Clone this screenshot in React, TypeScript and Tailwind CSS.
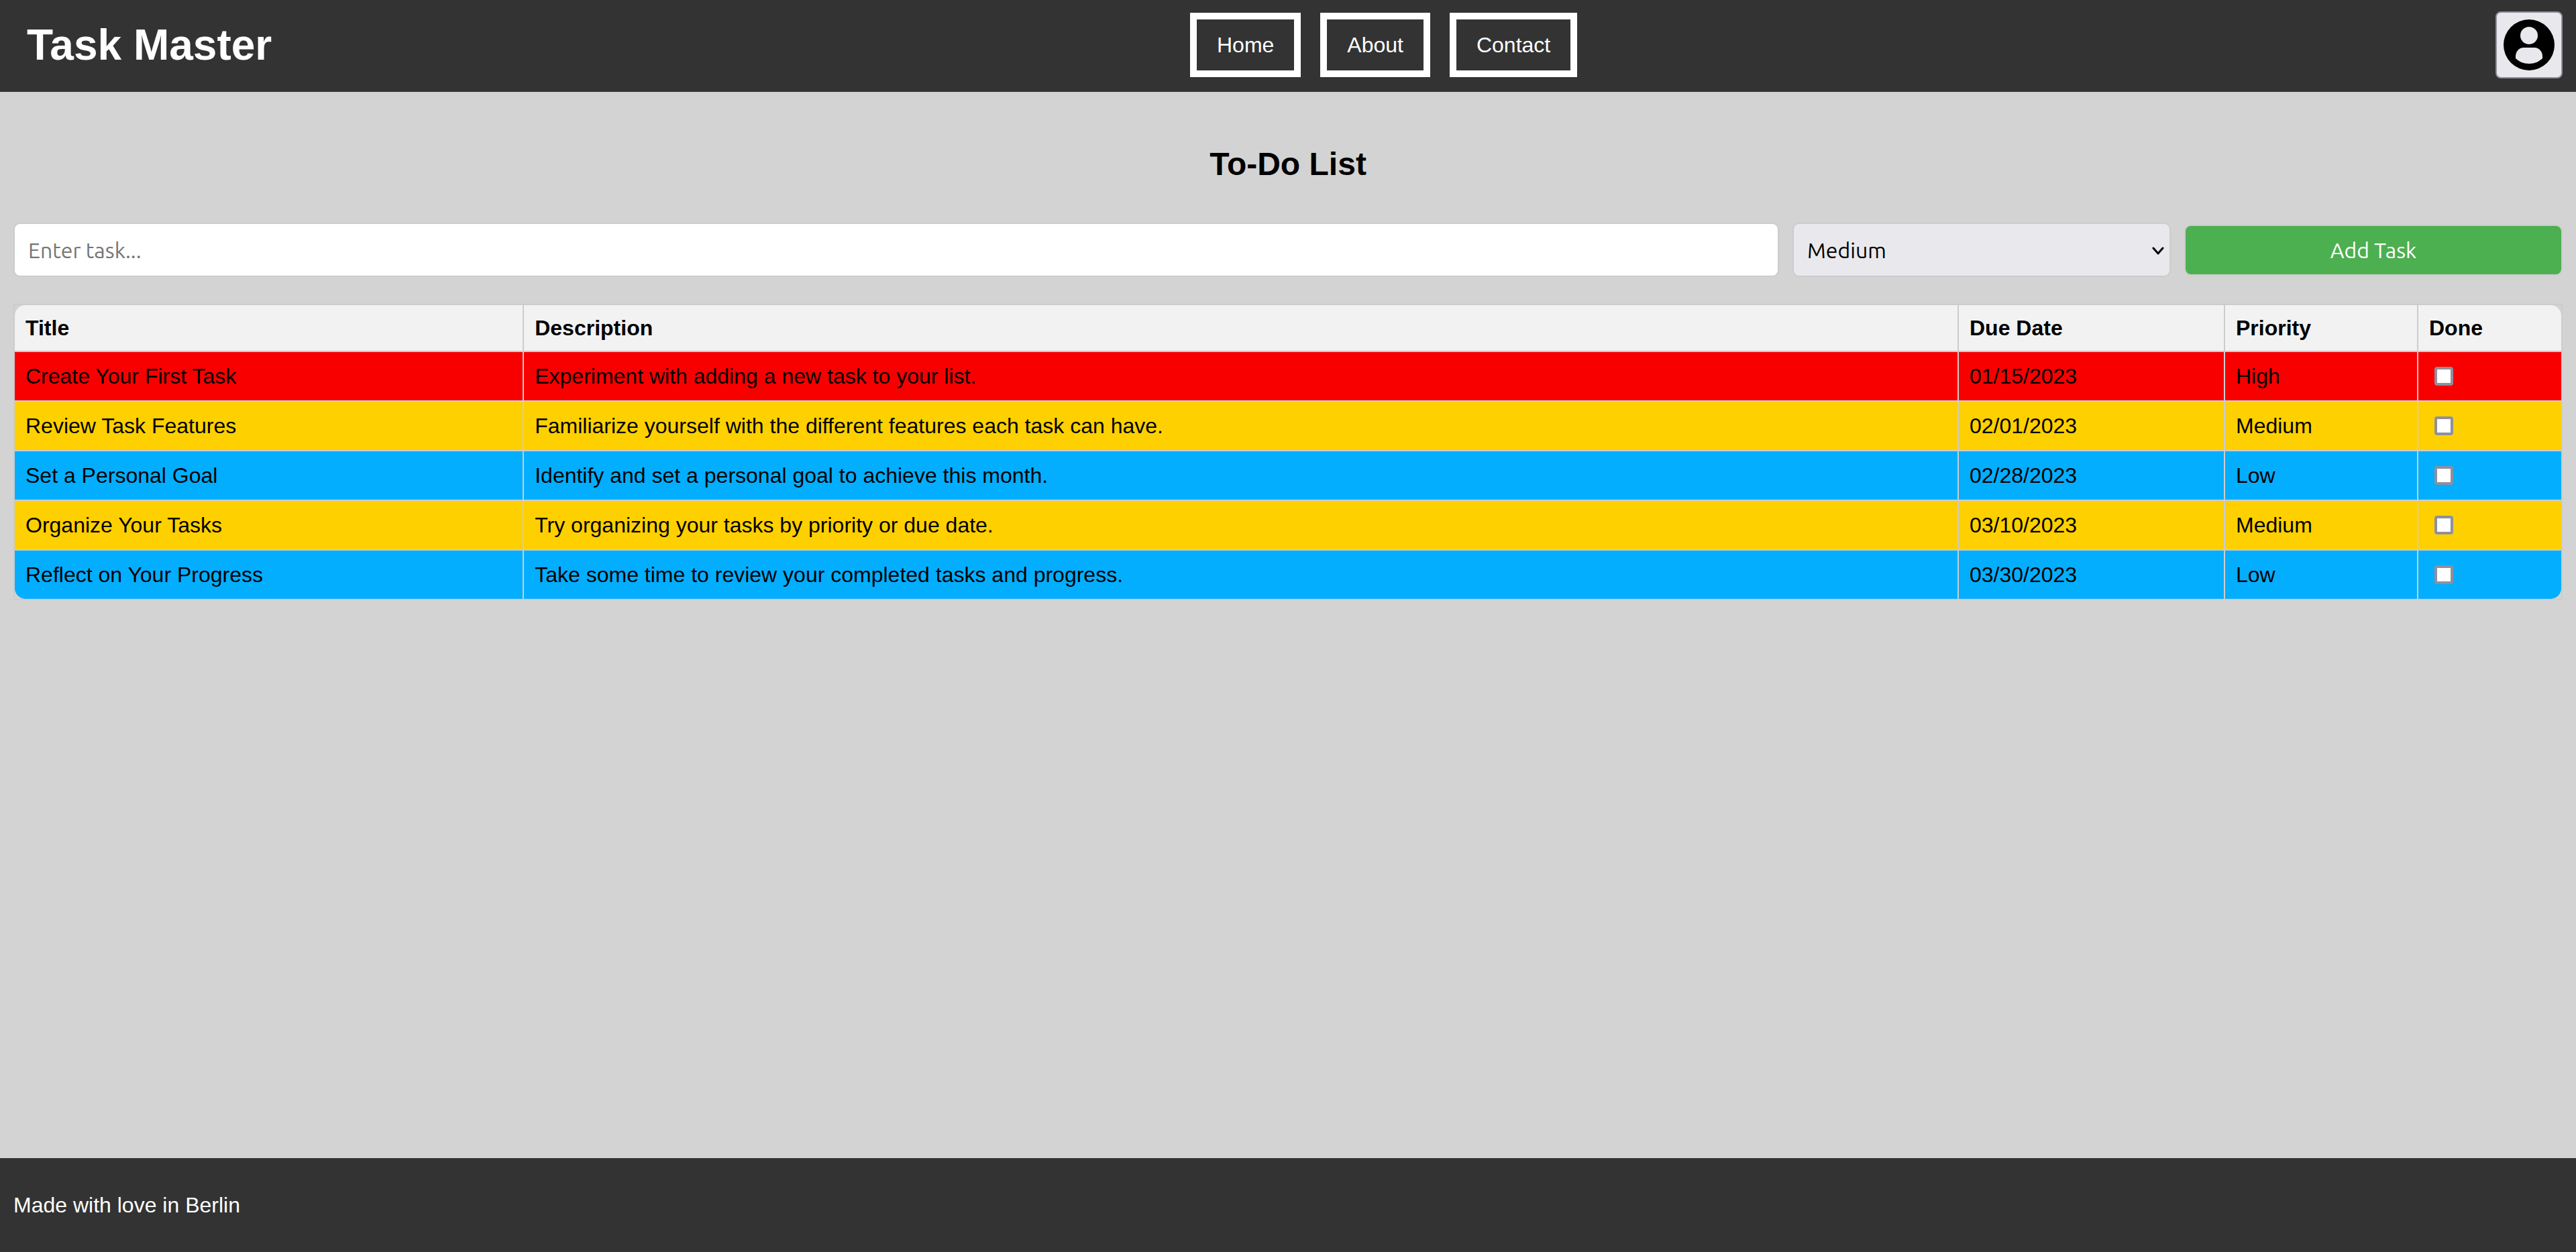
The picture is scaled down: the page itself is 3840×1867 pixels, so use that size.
import React from "react";

type Priority = "High" | "Medium" | "Low";

interface Task {
  title: string;
  description: string;
  due: string;
  priority: Priority;
}

const tasks: Task[] = [
  { title: "Create Your First Task", description: "Experiment with adding a new task to your list.", due: "01/15/2023", priority: "High" },
  { title: "Review Task Features", description: "Familiarize yourself with the different features each task can have.", due: "02/01/2023", priority: "Medium" },
  { title: "Set a Personal Goal", description: "Identify and set a personal goal to achieve this month.", due: "02/28/2023", priority: "Low" },
  { title: "Organize Your Tasks", description: "Try organizing your tasks by priority or due date.", due: "03/10/2023", priority: "Medium" },
  { title: "Reflect on Your Progress", description: "Take some time to review your completed tasks and progress.", due: "03/30/2023", priority: "Low" },
];

const cellColor: Record<Priority, string> = {
  High: "bg-[#f80000]",
  Medium: "bg-[#ffd000]",
  Low: "bg-[#03aeff]",
};

const navLinks = ["Home", "About", "Contact"];

const headings = [
  { label: "Title", width: "w-[20%]" },
  { label: "Description", width: "" },
  { label: "Due Date", width: "w-[397px]" },
  { label: "Priority", width: "w-[288px]" },
  { label: "Done", width: "w-[213px]" },
];

function AvatarIcon() {
  return (
    <svg viewBox="0 0 76 76" className="size-[76px]" aria-hidden="true">
      <circle cx="38" cy="38" r="38" fill="#000" />
      <circle cx="38" cy="24" r="13" fill="#e9e9ed" />
      <path d="M30 42h16c7 0 12 6 12 13v3c-5 5-12 8-20 8s-15-3-20-8v-3c0-7 5-13 12-13z" fill="#e9e9ed" />
    </svg>
  );
}

function Header() {
  return (
    <header className="flex items-center justify-between bg-[#333] px-5 pt-[17px] pb-5 text-white">
      <h1 className="pl-5 text-[64px] leading-none font-bold">Task Master</h1>
      <nav className="flex gap-[29px]">
        {navLinks.map((label) => (
          <a key={label} href="#" className="border-[10px] border-white px-[30px] py-5 leading-9">
            {label}
          </a>
        ))}
      </nav>
      <button
        type="button"
        aria-label="Account"
        className="flex size-[100px] items-center justify-center rounded-lg border-2 border-[#8f8f9d] bg-[#e9e9ed]"
      >
        <AvatarIcon />
      </button>
    </header>
  );
}

function TaskForm() {
  return (
    <form
      className="grid grid-cols-[70fr_15fr_15fr] items-center gap-5 font-['Ubuntu','Noto_Sans',sans-serif] text-[32px]"
      onSubmit={(e) => e.preventDefault()}
    >
      <input
        type="text"
        aria-label="Task"
        placeholder="Enter task..."
        className="h-[81px] w-full min-w-0 rounded-[10px] border-2 border-[#ccc] bg-white px-5 placeholder:text-[#757575]"
      />
      <div className="relative min-w-0">
        <select
          aria-label="Priority"
          defaultValue="Medium"
          className="block h-[81px] w-full appearance-none rounded-[10px] border-2 border-[#ccc] bg-[#e9e9ed] px-5"
        >
          <option>High</option>
          <option>Medium</option>
          <option>Low</option>
        </select>
        <svg viewBox="0 0 18 12" className="pointer-events-none absolute top-9 right-2.5 h-3 w-[18px]" aria-hidden="true">
          <path d="M2 2l7 8 7-8" fill="none" stroke="#000" strokeWidth="3" strokeLinecap="round" strokeLinejoin="round" />
        </svg>
      </div>
      <button type="submit" className="h-[76px] min-w-0 rounded-[10px] border-2 border-[#ccc] bg-[#4caf50] text-white">
        Add Task
      </button>
    </form>
  );
}

function TaskTable() {
  return (
    <table className="w-full table-fixed border-separate border-spacing-0 border-2 border-[#ccc] text-left">
      <thead>
        <tr>
          {headings.map(({ label, width }) => (
            <th
              key={label}
              scope="col"
              className={`${width} border-r-2 border-b-2 border-[#ccc] bg-[#f2f2f2] p-4 leading-9 font-bold first:rounded-tl-2xl last:rounded-tr-2xl last:border-r-0`}
            >
              {label}
            </th>
          ))}
        </tr>
      </thead>
      <tbody className="[&>tr:last-child>td]:border-b-0 [&>tr:last-child>td:first-child]:rounded-bl-2xl [&>tr:last-child>td:last-child]:rounded-br-2xl">
        {tasks.map((task) => {
          const cell = `border-r-2 border-b-2 border-[#ccc] p-4 leading-10 last:border-r-0 ${cellColor[task.priority]}`;
          return (
            <tr key={task.title}>
              <td className={cell}>{task.title}</td>
              <td className={cell}>{task.description}</td>
              <td className={cell}>{task.due}</td>
              <td className={cell}>{task.priority}</td>
              <td className={cell}>
                <input
                  type="checkbox"
                  aria-label={`${task.title} done`}
                  className="ml-2 block size-7 appearance-none rounded-sm border-4 border-[#8f8f9d] bg-white checked:bg-[#0060df]"
                />
              </td>
            </tr>
          );
        })}
      </tbody>
    </table>
  );
}

export default function App() {
  return (
    <div className="flex min-h-screen flex-col bg-[#d3d3d3] font-['Liberation_Sans',Arial,sans-serif] text-[32px] leading-9 text-black">
      <Header />
      <main className="flex grow flex-col px-5">
        <h2 className="pt-[81px] pb-[60px] text-center text-[48px] leading-[54px] font-bold">To-Do List</h2>
        <TaskForm />
        <div className="pt-10">
          <TaskTable />
        </div>
      </main>
      <footer className="bg-[#333] px-5 py-[52px] text-white">
        <p>Made with love in Berlin</p>
      </footer>
    </div>
  );
}
